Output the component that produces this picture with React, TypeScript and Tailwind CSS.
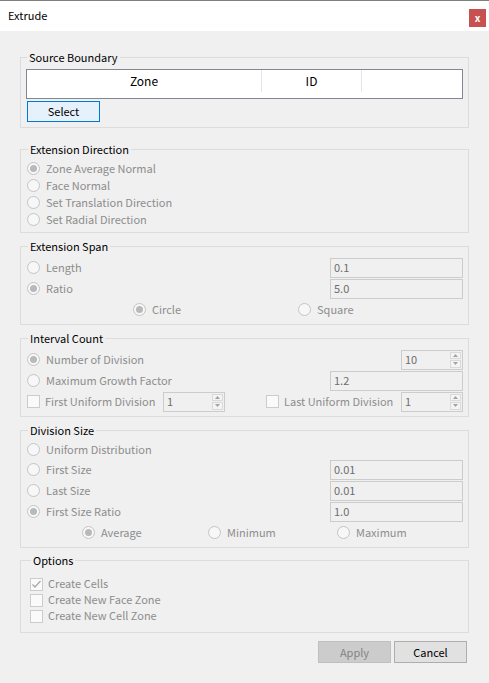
import type { ReactNode } from 'react'

function Radio({ checked = false, label }: { checked?: boolean; label: string }) {
  return (
    <div className="flex items-center">
      <span className="flex h-[13px] w-[13px] shrink-0 items-center justify-center rounded-full border border-[#c4c4c4] bg-[#f7f7f7]">
        {checked && <span className="h-[7px] w-[7px] rounded-full bg-[#b9b9b9]" />}
      </span>
      <span className="ml-[6px] whitespace-nowrap pb-[2px] text-[#8d8d8d]">{label}</span>
    </div>
  )
}

function Check({ checked = false, label }: { checked?: boolean; label: string }) {
  return (
    <div className="flex items-center">
      <span className="flex h-[13px] w-[13px] shrink-0 items-center justify-center border border-[#cccccc] bg-[#fafafa]">
        {checked && (
          <svg width="11" height="11" viewBox="0 0 11 11">
            <polyline points="1.5,5.5 4,8 9.5,2" fill="none" stroke="#a9a9a9" strokeWidth="1.3" />
          </svg>
        )}
      </span>
      <span className="ml-[5px] whitespace-nowrap pb-[2px] text-[#8d8d8d]">{label}</span>
    </div>
  )
}

function TextBox({ value }: { value: string }) {
  return (
    <div className="h-[20px] w-[133px] border border-[#cccccc] bg-[#f0f0f0] pl-[3px] leading-[17px] text-[#6d6d6d]">
      {value}
    </div>
  )
}

function Spinner({ value }: { value: string }) {
  return (
    <div className="flex h-[20px] w-[62px] items-stretch border border-[#cccccc] bg-[#f0f0f0]">
      <span className="flex-1 pl-[3px] leading-[17px] text-[#6d6d6d]">{value}</span>
      <div className="my-[1px] mr-[1px] flex w-[11px] flex-col gap-[1px]">
        <span className="flex flex-1 items-center justify-center border border-[#dadada] bg-[#f4f4f4]">
          <svg width="5" height="3" viewBox="0 0 5 3">
            <polygon points="0,3 5,3 2.5,0" fill="#a3a3a3" />
          </svg>
        </span>
        <span className="flex flex-1 items-center justify-center border border-[#dadada] bg-[#f4f4f4]">
          <svg width="5" height="3" viewBox="0 0 5 3">
            <polygon points="0,0 5,0 2.5,3" fill="#a3a3a3" />
          </svg>
        </span>
      </div>
    </div>
  )
}

function Group({ title, className, children }: { title: string; className: string; children: ReactNode }) {
  return (
    <fieldset className={`mx-[20px] border border-[#dcdcdc] ${className}`}>
      <legend className="ml-[1px] px-[2px] leading-[14px] text-black">{title}</legend>
      {children}
    </fieldset>
  )
}

export default function App() {
  return (
    <div className="h-[683px] w-[489px] bg-[#f0f0f0] font-['Noto_Sans_CJK_JP','Noto_Sans',sans-serif] text-[11px] leading-[14px] text-black">
      {/* title bar */}
      <div className="flex h-[31px] items-start justify-between border-t border-[#7f7f7f] bg-white">
        <span className="mt-[7px] pl-[8px]">Extrude</span>
        <span className="mr-[3px] mt-[8px] flex h-[18px] w-[17px] items-center justify-center bg-[#c75050] pb-[1px] text-[10px] font-bold leading-none text-white">
          x
        </span>
      </div>

      <Group title="Source Boundary" className="mt-[19px] pb-[5px] pl-[5px] pr-[5px] pt-[5px]">
        <div className="h-[30px] border border-[#828790] bg-white">
          <div className="flex h-[22px] text-[12px]">
            <div className="flex w-[235px] items-center justify-center border-r border-[#e5e5e5]">Zone</div>
            <div className="flex w-[100px] items-center justify-center border-r border-[#e5e5e5]">ID</div>
            <div className="flex-1" />
          </div>
        </div>
        <div className="ml-[1px] mt-[2px] flex h-[21px] w-[73px] items-center justify-center border border-[#0078d7] bg-[#e5f1fb] pb-[1px]">
          Select
        </div>
      </Group>

      <Group title="Extension Direction" className="mt-[14px] pb-[4px] pl-[6px] pr-[5px] pt-[4px]">
        <div className="flex h-[17px] items-center"><Radio checked label="Zone Average Normal" /></div>
        <div className="flex h-[17px] items-center"><Radio label="Face Normal" /></div>
        <div className="flex h-[17px] items-center"><Radio label="Set Translation Direction" /></div>
        <div className="flex h-[17px] items-center"><Radio label="Set Radial Direction" /></div>
      </Group>

      <Group title="Extension Span" className="mt-[6px] pb-[4px] pl-[6px] pr-[5px] pt-[4px]">
        <div className="flex h-[21px] items-center justify-between">
          <Radio label="Length" />
          <TextBox value="0.1" />
        </div>
        <div className="flex h-[21px] items-center justify-between">
          <Radio checked label="Ratio" />
          <TextBox value="5.0" />
        </div>
        <div className="flex h-[21px] items-center pl-[106px]">
          <div className="w-[165px]"><Radio checked label="Circle" /></div>
          <Radio label="Square" />
        </div>
      </Group>

      <Group title="Interval Count" className="mt-[6px] pb-[4px] pl-[6px] pr-[5px] pt-[4px]">
        <div className="flex h-[21px] items-center justify-between">
          <Radio checked label="Number of Division" />
          <Spinner value="10" />
        </div>
        <div className="flex h-[21px] items-center justify-between">
          <Radio label="Maximum Growth Factor" />
          <TextBox value="1.2" />
        </div>
        <div className="flex h-[21px] items-center">
          <div className="w-[136px]"><Check label="First Uniform Division" /></div>
          <Spinner value="1" />
          <div className="ml-[41px] w-[135px]"><Check label="Last Uniform Division" /></div>
          <Spinner value="1" />
        </div>
      </Group>

      <Group title="Division Size" className="mt-[6px] pb-[4px] pl-[6px] pr-[5px] pt-[3px]">
        <div className="flex h-[19px] items-center"><Radio label="Uniform Distribution" /></div>
        <div className="flex h-[21px] items-center justify-between">
          <Radio label="First Size" />
          <TextBox value="0.01" />
        </div>
        <div className="flex h-[21px] items-center justify-between">
          <Radio label="Last Size" />
          <TextBox value="0.01" />
        </div>
        <div className="flex h-[21px] items-center justify-between">
          <Radio checked label="First Size Ratio" />
          <TextBox value="1.0" />
        </div>
        <div className="flex h-[21px] items-center pl-[55px]">
          <div className="w-[126px]"><Radio checked label="Average" /></div>
          <div className="w-[129px]"><Radio label="Minimum" /></div>
          <Radio label="Maximum" />
        </div>
      </Group>

      <Group title="Options" className="mt-[5px] pb-[8px] pl-[9px] pr-[5px] pt-[9px]">
        <div className="flex h-[16px] items-center"><Check checked label="Create Cells" /></div>
        <div className="flex h-[16px] items-center"><Check label="Create New Face Zone" /></div>
        <div className="flex h-[16px] items-center"><Check label="Create New Cell Zone" /></div>
      </Group>

      <div className="mt-[8px] flex justify-end gap-[3px] pr-[22px]">
        <div className="flex h-[22px] w-[73px] items-center justify-center border border-[#bfbfbf] bg-[#cccccc] pb-[1px] text-[#838383]">
          Apply
        </div>
        <div className="flex h-[22px] w-[73px] items-center justify-center border border-[#adadad] bg-[#e1e1e1] pb-[1px]">
          Cancel
        </div>
      </div>
    </div>
  )
}
